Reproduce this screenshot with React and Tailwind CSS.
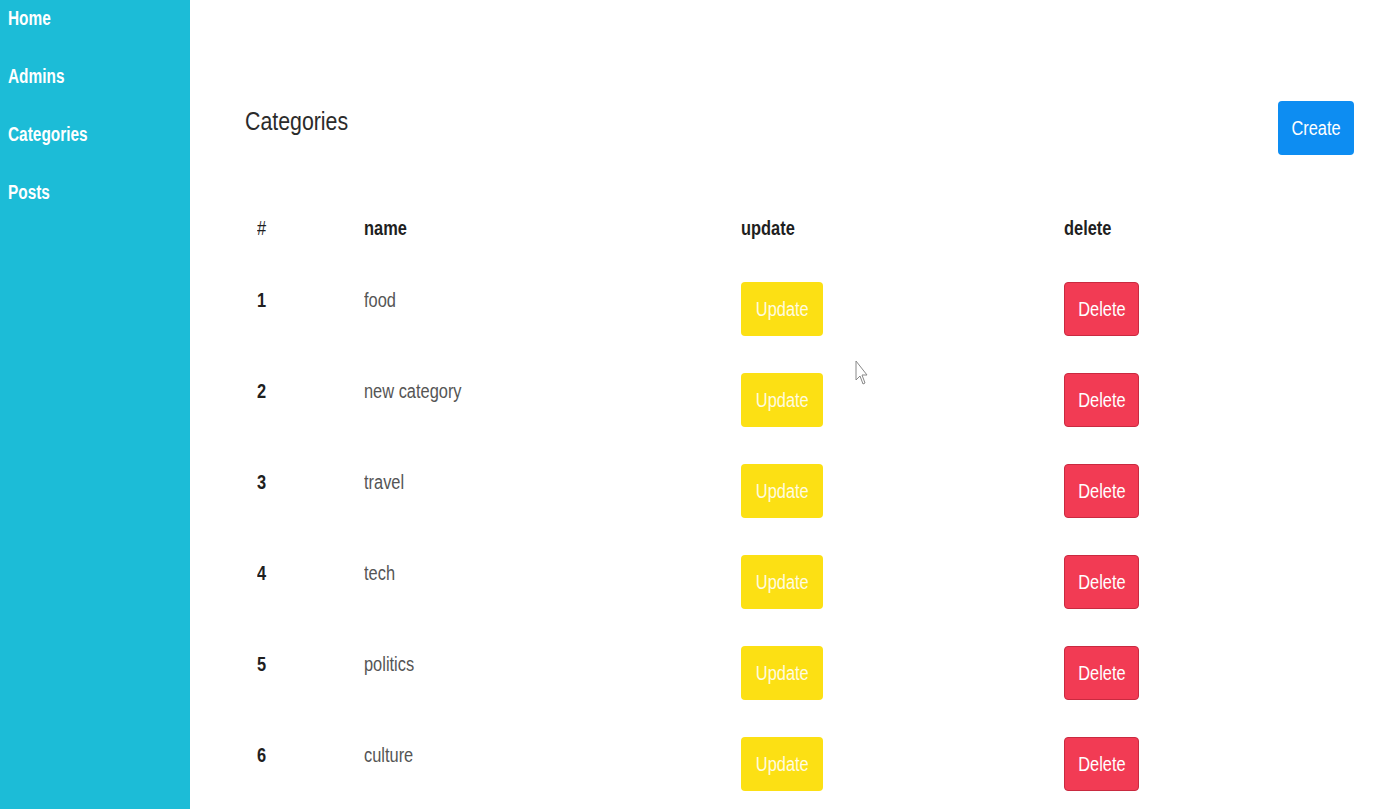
import React from 'react';

const rows = ['food', 'new category', 'travel', 'tech', 'politics', 'culture'];

// the capture is squeezed sideways, so text gets a narrow scale
function Txt({ children, center = false, className = '' }) {
  return (
    <span
      className={`inline-block whitespace-nowrap ${center ? 'origin-center' : 'origin-left'} ${className || 'scale-x-[0.82]'}`}
    >
      {children}
    </span>
  );
}

export default function App() {
  return (
    <div className="relative flex h-[809px] w-[1400px] overflow-hidden bg-white font-['Liberation_Sans',Arial,sans-serif] text-[#212529]">
      {/* Sidebar */}
      <aside className="h-full w-[190px] shrink-0 bg-[#1cbcd7]">
        <nav className="flex flex-col gap-[34px] px-2 pt-[6px]">
          {['Home', 'Admins', 'Categories', 'Posts'].map((label) => (
            <a key={label} href="#" className="text-[20px] font-bold leading-[24px] text-white">
              <Txt className="scale-x-[0.77]">{label}</Txt>
            </a>
          ))}
        </nav>
      </aside>

      {/* Content */}
      <main className="flex-1 pl-[55px] pr-[46px] pt-[101px]">
        <div className="flex items-start justify-between">
          <h1 className="mt-[4px] text-[26px] font-normal leading-[32px] text-[#2b2b2b]">
            <Txt>Categories</Txt>
          </h1>
          <button className="flex h-[54px] w-[76px] items-center justify-center rounded-[4px] bg-[#0d8df2] text-[20px] text-white">
            <Txt center>Create</Txt>
          </button>
        </div>

        <div className="mt-[61px]">
          <div className="grid grid-cols-[107px_377px_323px_1fr] text-[20px] font-bold leading-[24px] text-[#1f1f1f]">
            <div className="pl-3 font-normal"><Txt>#</Txt></div>
            <div className="pl-3"><Txt>name</Txt></div>
            <div className="pl-3"><Txt>update</Txt></div>
            <div className="pl-3"><Txt>delete</Txt></div>
          </div>

          <div className="mt-[42px]">
            {rows.map((name, i) => (
              <div key={name} className="grid h-[91px] grid-cols-[107px_377px_323px_1fr] items-start">
                <div className="mt-[6px] pl-3 text-[20px] font-bold leading-[24px] text-[#1f1f1f]">
                  <Txt>{i + 1}</Txt>
                </div>
                <div className="mt-[6px] pl-3 text-[20px] leading-[24px] text-[#555]">
                  <Txt>{name}</Txt>
                </div>
                <div className="pl-3">
                  <button className="flex h-[54px] w-[82px] items-center justify-center rounded-[4px] bg-[#fce014] text-[20px] text-[#fffbe0]">
                    <Txt center>Update</Txt>
                  </button>
                </div>
                <div className="pl-3">
                  <button className="flex h-[54px] w-[75px] items-center justify-center rounded-[4px] border border-[#c92a40] bg-[#f23b54] text-[20px] text-white">
                    <Txt center>Delete</Txt>
                  </button>
                </div>
              </div>
            ))}
          </div>
        </div>
      </main>

      {/* mouse pointer left in the capture */}
      <svg className="absolute left-[855px] top-[360px]" width="14" height="28" viewBox="0 0 14 28">
        <path d="M1 1 L1 20 L5 16 L8 24 L10 23 L7 15 L12 15 Z" fill="white" stroke="#888" strokeWidth="1" />
      </svg>
    </div>
  );
}
